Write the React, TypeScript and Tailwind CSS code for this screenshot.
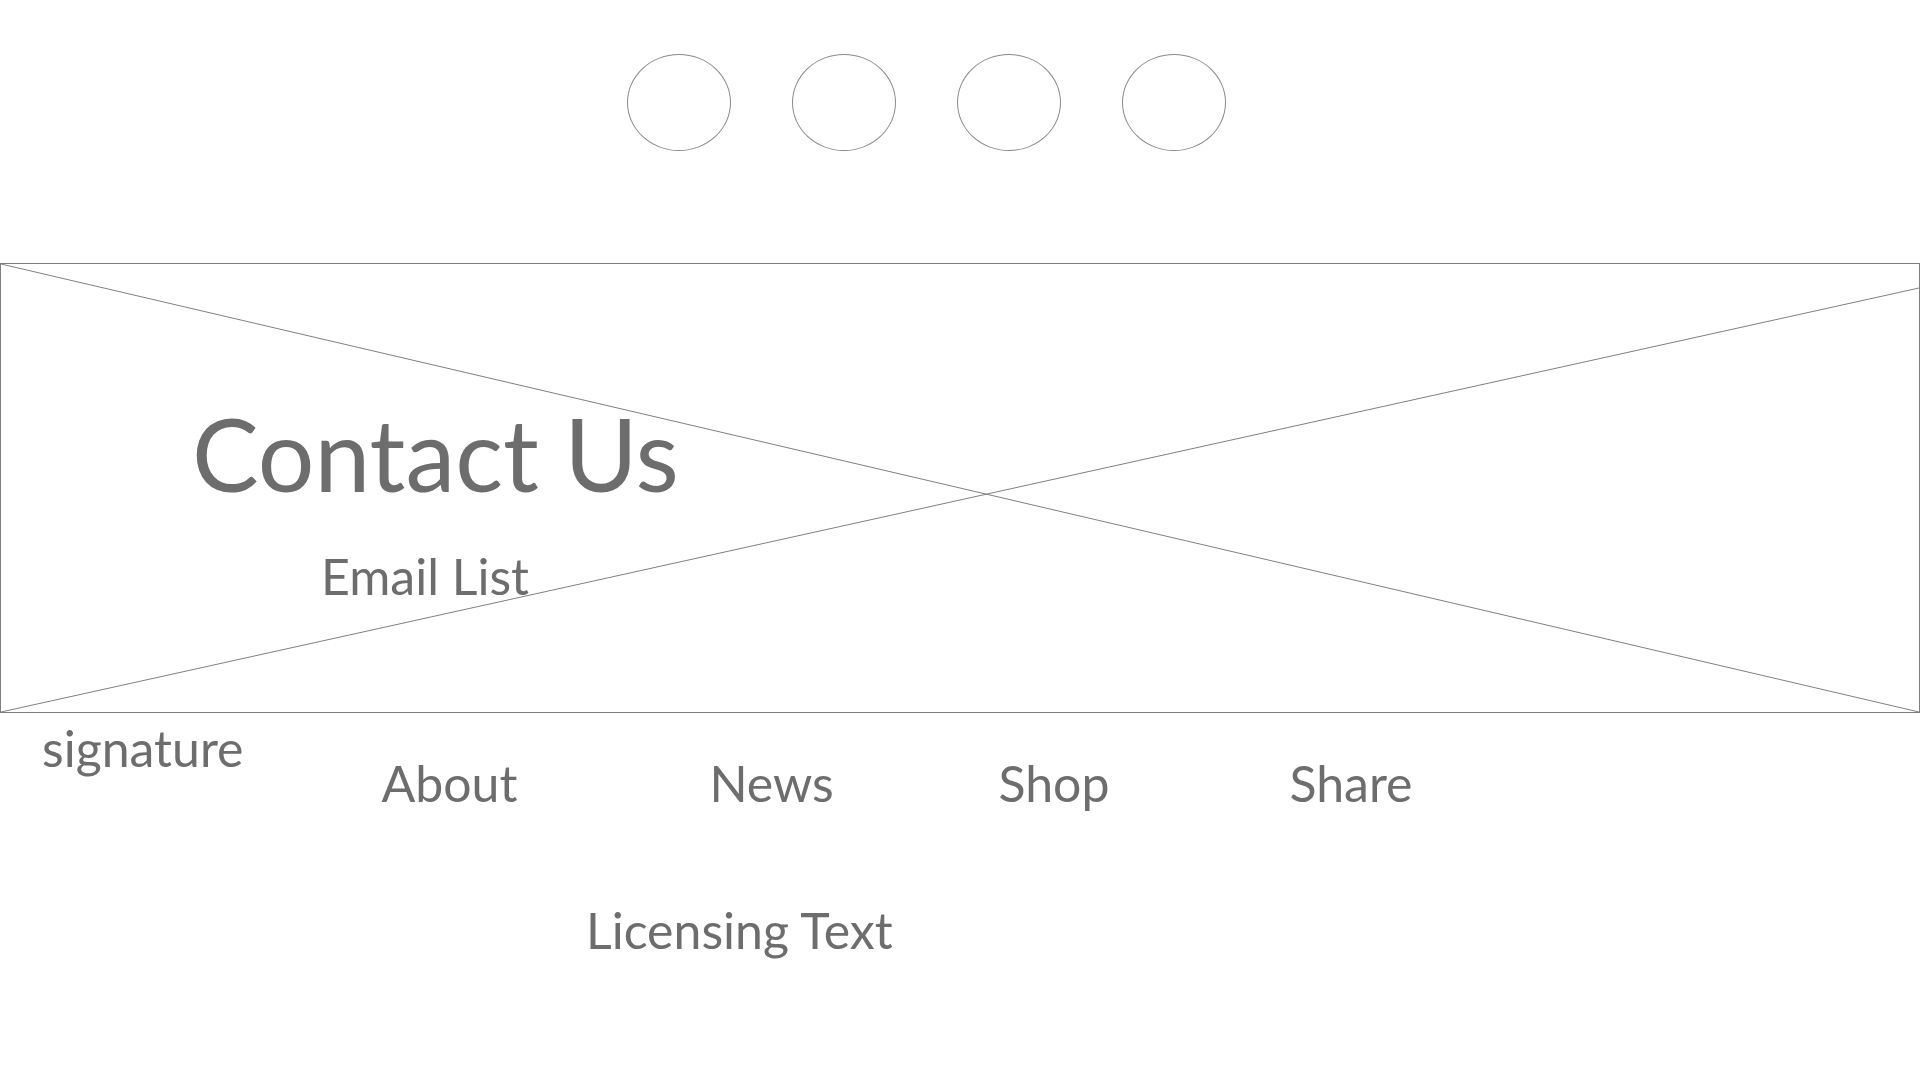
import React from "react";

const font = { fontFamily: "Lato, 'Open Sans', sans-serif" };

export default function App() {
  return (
    <div className="w-[1920px] h-[1080px] bg-white text-[#6d6d6d] overflow-hidden" style={font}>
      {/* circles */}
      <div className="h-[263px] pt-[54px] pl-[627px] flex gap-[61px] items-start">
        {[0, 1, 2, 3].map((i) => (
          <div key={i} className="w-[104px] h-[97px] rounded-[50%] border border-[#8a8a8a]" />
        ))}
      </div>

      {/* hero placeholder box */}
      <div className="relative h-[450px] w-[1920px] border border-[#7f7f7f]">
        <svg className="absolute inset-0 w-full h-full" viewBox="0 0 1918 448" preserveAspectRatio="none">
          <line x1="0" y1="0" x2="1918" y2="448" stroke="#808080" strokeWidth="1" />
          <line x1="0" y1="448" x2="1918" y2="24" stroke="#808080" strokeWidth="1" />
        </svg>
        <div className="relative flex flex-col items-start">
          <div className="mt-[139px] ml-[191px] text-[100px] leading-none">Contact Us</div>
          <div className="mt-[48px] ml-[320px] text-[50px] leading-none">Email List</div>
        </div>
      </div>

      {/* footer */}
      <div className="flex items-start text-[50px] leading-none">
        <div className="mt-[10px] ml-[42px]">signature</div>
        <div className="mt-[45px] ml-[138px] flex">
          <div className="w-[328px]">About</div>
          <div className="w-[289px]">News</div>
          <div className="w-[291px]">Shop</div>
          <div>Share</div>
        </div>
      </div>
      <div className="mt-[97px] ml-[586px] text-[50px] leading-none">Licensing Text</div>
    </div>
  );
}
